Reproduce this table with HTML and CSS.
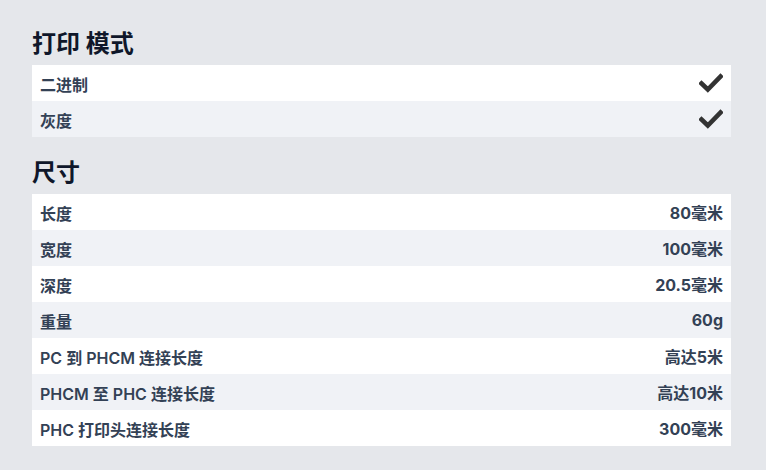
FILE: index.html
```html
<!DOCTYPE html>
<html lang="zh">
<head>
<meta charset="utf-8">
<link rel="stylesheet" href="styles.css">
</head>
<body>
<div class="page">
  <h2 class="title">打印 模式</h2>
  <div class="table">
    <div class="row"><span class="label">二进制</span><span class="value"><svg class="check" viewBox="0 0 24 20" width="24" height="20"><path d="M2.5 10.5 L8.8 16.5 L21.5 3.5" fill="none" stroke="#333" stroke-width="4.6" stroke-linecap="square" stroke-linejoin="miter"/></svg></span></div>
    <div class="row"><span class="label">灰度</span><span class="value"><svg class="check" viewBox="0 0 24 20" width="24" height="20"><path d="M2.5 10.5 L8.8 16.5 L21.5 3.5" fill="none" stroke="#333" stroke-width="4.6" stroke-linecap="square" stroke-linejoin="miter"/></svg></span></div>
  </div>
  <h2 class="title second">尺寸</h2>
  <div class="table">
    <div class="row"><span class="label">长度</span><span class="value">80毫米</span></div>
    <div class="row"><span class="label">宽度</span><span class="value">100毫米</span></div>
    <div class="row"><span class="label">深度</span><span class="value">20.5毫米</span></div>
    <div class="row"><span class="label">重量</span><span class="value">60g</span></div>
    <div class="row"><span class="label">PC 到 PHCM 连接长度</span><span class="value">高达5米</span></div>
    <div class="row"><span class="label">PHCM 至 PHC 连接长度</span><span class="value">高达10米</span></div>
    <div class="row"><span class="label">PHC 打印头连接长度</span><span class="value">300毫米</span></div>
  </div>
</div>
</body>
</html>
```

FILE: styles.css
```css
html, body {
  margin: 0;
  padding: 0;
  background: #e5e7eb;
}
.page {
  padding: 29px 35px 0 32px;
  font-family: Inter, "Noto Sans CJK SC", sans-serif;
  color: #374151;
}
.title {
  margin: 0 0 6px 0;
  font-size: 24px;
  line-height: 30px;
  font-weight: 700;
  color: #0f172a;
}
.title.second {
  margin-top: 21px;
}
.table {
  display: flex;
  flex-direction: column;
}
.row {
  height: 36px;
  display: flex;
  align-items: center;
  justify-content: space-between;
  padding: 0 8px;
  background: #ffffff;
  font-size: 16px;
  font-weight: 600;
  color: #334155;
}
.row:nth-child(even) {
  background: #f0f2f6;
}
.label {
  padding-top: 1px;
}
.value {
  font-weight: 700;
  display: flex;
  align-items: center;
}
.check {
  display: block;
}
```
